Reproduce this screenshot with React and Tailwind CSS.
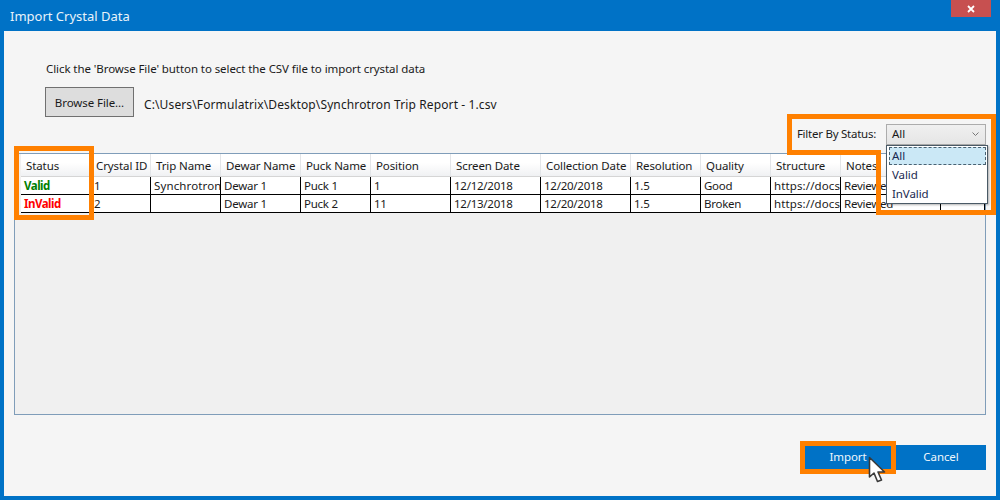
const COLS = [
  ["Status", 70],
  ["Crystal ID", 60],
  ["Trip Name", 70],
  ["Dewar Name", 80],
  ["Puck Name", 70],
  ["Position", 80],
  ["Screen Date", 90],
  ["Collection Date", 90],
  ["Resolution", 70],
  ["Quality", 70],
  ["Structure", 70],
  ["Notes", 100],
  ["", 44],
];

const ROWS = [
  [["Valid", "font-bold tracking-[-0.5px] text-[#008000]"], "1", "Synchrotron", "Dewar 1", "Puck 1", "1", "12/12/2018", "12/20/2018", "1.5", "Good", "https://docs.google.com", "Reviewed", ""],
  [["InValid", "font-bold tracking-[-0.5px] text-[#ff0000]"], "2", "", "Dewar 1", "Puck 2", "11", "12/13/2018", "12/20/2018", "1.5", "Broken", "https://docs.google.com", "Reviewed", ""],
];

function HeaderCell({ label, width }) {
  return (
    <div
      style={{ width }}
      className="h-[22px] shrink-0 overflow-hidden whitespace-nowrap border-r border-r-[#e3e5e8] bg-gradient-to-b from-white from-40% to-[#f0f1f3] pl-[5px] pt-[3px] leading-[17px] tracking-[-0.1px] text-[#1a1a1a]"
    >
      {label}
    </div>
  );
}

function Cell({ value, width, wide }) {
  const isObj = Array.isArray(value);
  const tone = isObj ? value[1] : wide ? "tracking-[0.12px] text-[#1a1a1a]" : "tracking-[-0.25px] text-[#1a1a1a]";
  return (
    <div
      style={{ width }}
      className={`h-[17px] shrink-0 overflow-hidden whitespace-nowrap border-r border-r-black pl-[3px] leading-[17px] ${tone}`}
    >
      {isObj ? value[0] : value}
    </div>
  );
}

export default function App() {
  return (
    <div className="relative flex h-[500px] w-[1000px] flex-col overflow-hidden bg-[#0072c6] px-[4px] pb-[4px] text-[11.5px] tracking-[-0.08px] font-['Noto_Sans','Open_Sans',sans-serif]">
      <div className="flex h-[31px] shrink-0 items-start justify-between">
        <div className="pl-[6px] pt-[7px] text-[13px] leading-[18px] tracking-normal text-[#e8f2fa]">Import Crystal Data</div>
        <div className="mr-[5px] flex h-[17px] w-[40px] items-center justify-center bg-[#c75050]">
          <svg width="8" height="8" viewBox="0 0 8 8">
            <path d="M1 1L7 7M7 1L1 7" stroke="#fff" strokeWidth="1.8" />
          </svg>
        </div>
      </div>

      <div className="relative flex min-h-0 flex-1 flex-col bg-[#f5f5f5] pl-[10px] pr-[10px]">
        <div className="pl-[32px] pt-[29px] leading-[17px] text-[#1a1a1a]">
          Click the 'Browse File' button to select the CSV file to import crystal data
        </div>
        <div className="mt-[10px] flex items-center pl-[31px]">
          <div className="flex h-[30px] w-[89px] items-center justify-center border border-[#707070] bg-[#dddddd] pt-[2px] text-[#1a1a1a]">
            Browse File...
          </div>
          <div className="pl-[10px] pt-[5px] text-[12px] tracking-[0.12px] text-[#1a1a1a]">C:\Users\Formulatrix\Desktop\Synchrotron Trip Report - 1.csv</div>
        </div>

        <div className="mt-[7px] flex h-[21px] items-center justify-end">
          <span className="mb-[2px] mr-[10px] tracking-[-0.25px] text-[#1a1a1a]">Filter By Status:</span>
          <div className="flex h-[21px] w-[100px] items-center justify-between border border-[#acacac] bg-gradient-to-b from-[#f0f0f0] to-[#e5e5e5] pl-[5px] pr-[6px] text-[#1a1a1a]">
            <span className="mb-[2px]">All</span>
            <svg width="7" height="5" viewBox="0 0 7 5">
              <path d="M0.5 0.5L3.5 3.5L6.5 0.5" fill="none" stroke="#777" strokeWidth="1" />
            </svg>
          </div>
        </div>

        <div className="mt-[8px] h-[262px] shrink-0 overflow-hidden border border-[#7f9db9] bg-[#f0f0f0] pl-[6px]">
          <div className="flex border-b border-b-[#d5d5d5]">
            {COLS.map(([label, w]) => (
              <HeaderCell key={label || "blank"} label={label} width={w} />
            ))}
          </div>
          {ROWS.map((row, r) => (
            <div key={r} className="flex border-b border-b-black bg-white">
              {row.map((v, i) => (
                <Cell key={i} value={v} width={COLS[i][1]} wide={i === 2 || i === 10} />
              ))}
            </div>
          ))}
        </div>

        <div className="mt-[30px] flex justify-end text-[#f0f7fc]">
          <div className="flex h-[25px] w-[91px] items-center justify-center bg-[#0072c6] pb-[2px] pr-[5px]">Import</div>
          <div className="flex h-[25px] w-[90px] items-center justify-center bg-[#0072c6] pb-[2px]">Cancel</div>
        </div>
      </div>

      {/* open dropdown list */}
      <div className="absolute left-[886px] top-[145px] h-[59px] w-[102px] border border-[#4a5a66] bg-white pb-[1px] pl-[2px] pr-[1px] pt-[1px] text-[#1a2a50] shadow-[1px_1px_2px_rgba(0,0,0,0.3)]">
        <div className="h-[18px] border border-dashed border-[#4a6272] bg-[#cbe8f6] pl-[2px] leading-[15px]">All</div>
        <div className="h-[19px] pl-[3px] leading-[19px]">Valid</div>
        <div className="h-[19px] pl-[3px] leading-[19px]">InValid</div>
      </div>

      {/* orange annotations */}
      <div className="absolute left-[14px] top-[146px] h-[74px] w-[80px] border-[5px] border-[#ff8000]" />
      <svg className="absolute left-0 top-0" width="1000" height="500">
        <path d="M789.5 116.5H993.5V212.5H878.5V152.5H789.5Z" fill="none" stroke="#ff8000" strokeWidth="5" />
      </svg>
      <div className="absolute left-[800px] top-[441px] h-[33px] w-[96px] border-[5px] border-[#ff8000]" />

      {/* mouse cursor */}
      <svg className="absolute left-[868px] top-[456px]" width="20" height="28" viewBox="0 0 20 28">
        <path
          d="M1.5 1.5V21L6 17L9.5 25.5L13.5 24L10 16H16.5Z"
          fill="#fff"
          stroke="#3a3a3a"
          strokeWidth="1.6"
          strokeLinejoin="round"
        />
      </svg>
    </div>
  );
}
